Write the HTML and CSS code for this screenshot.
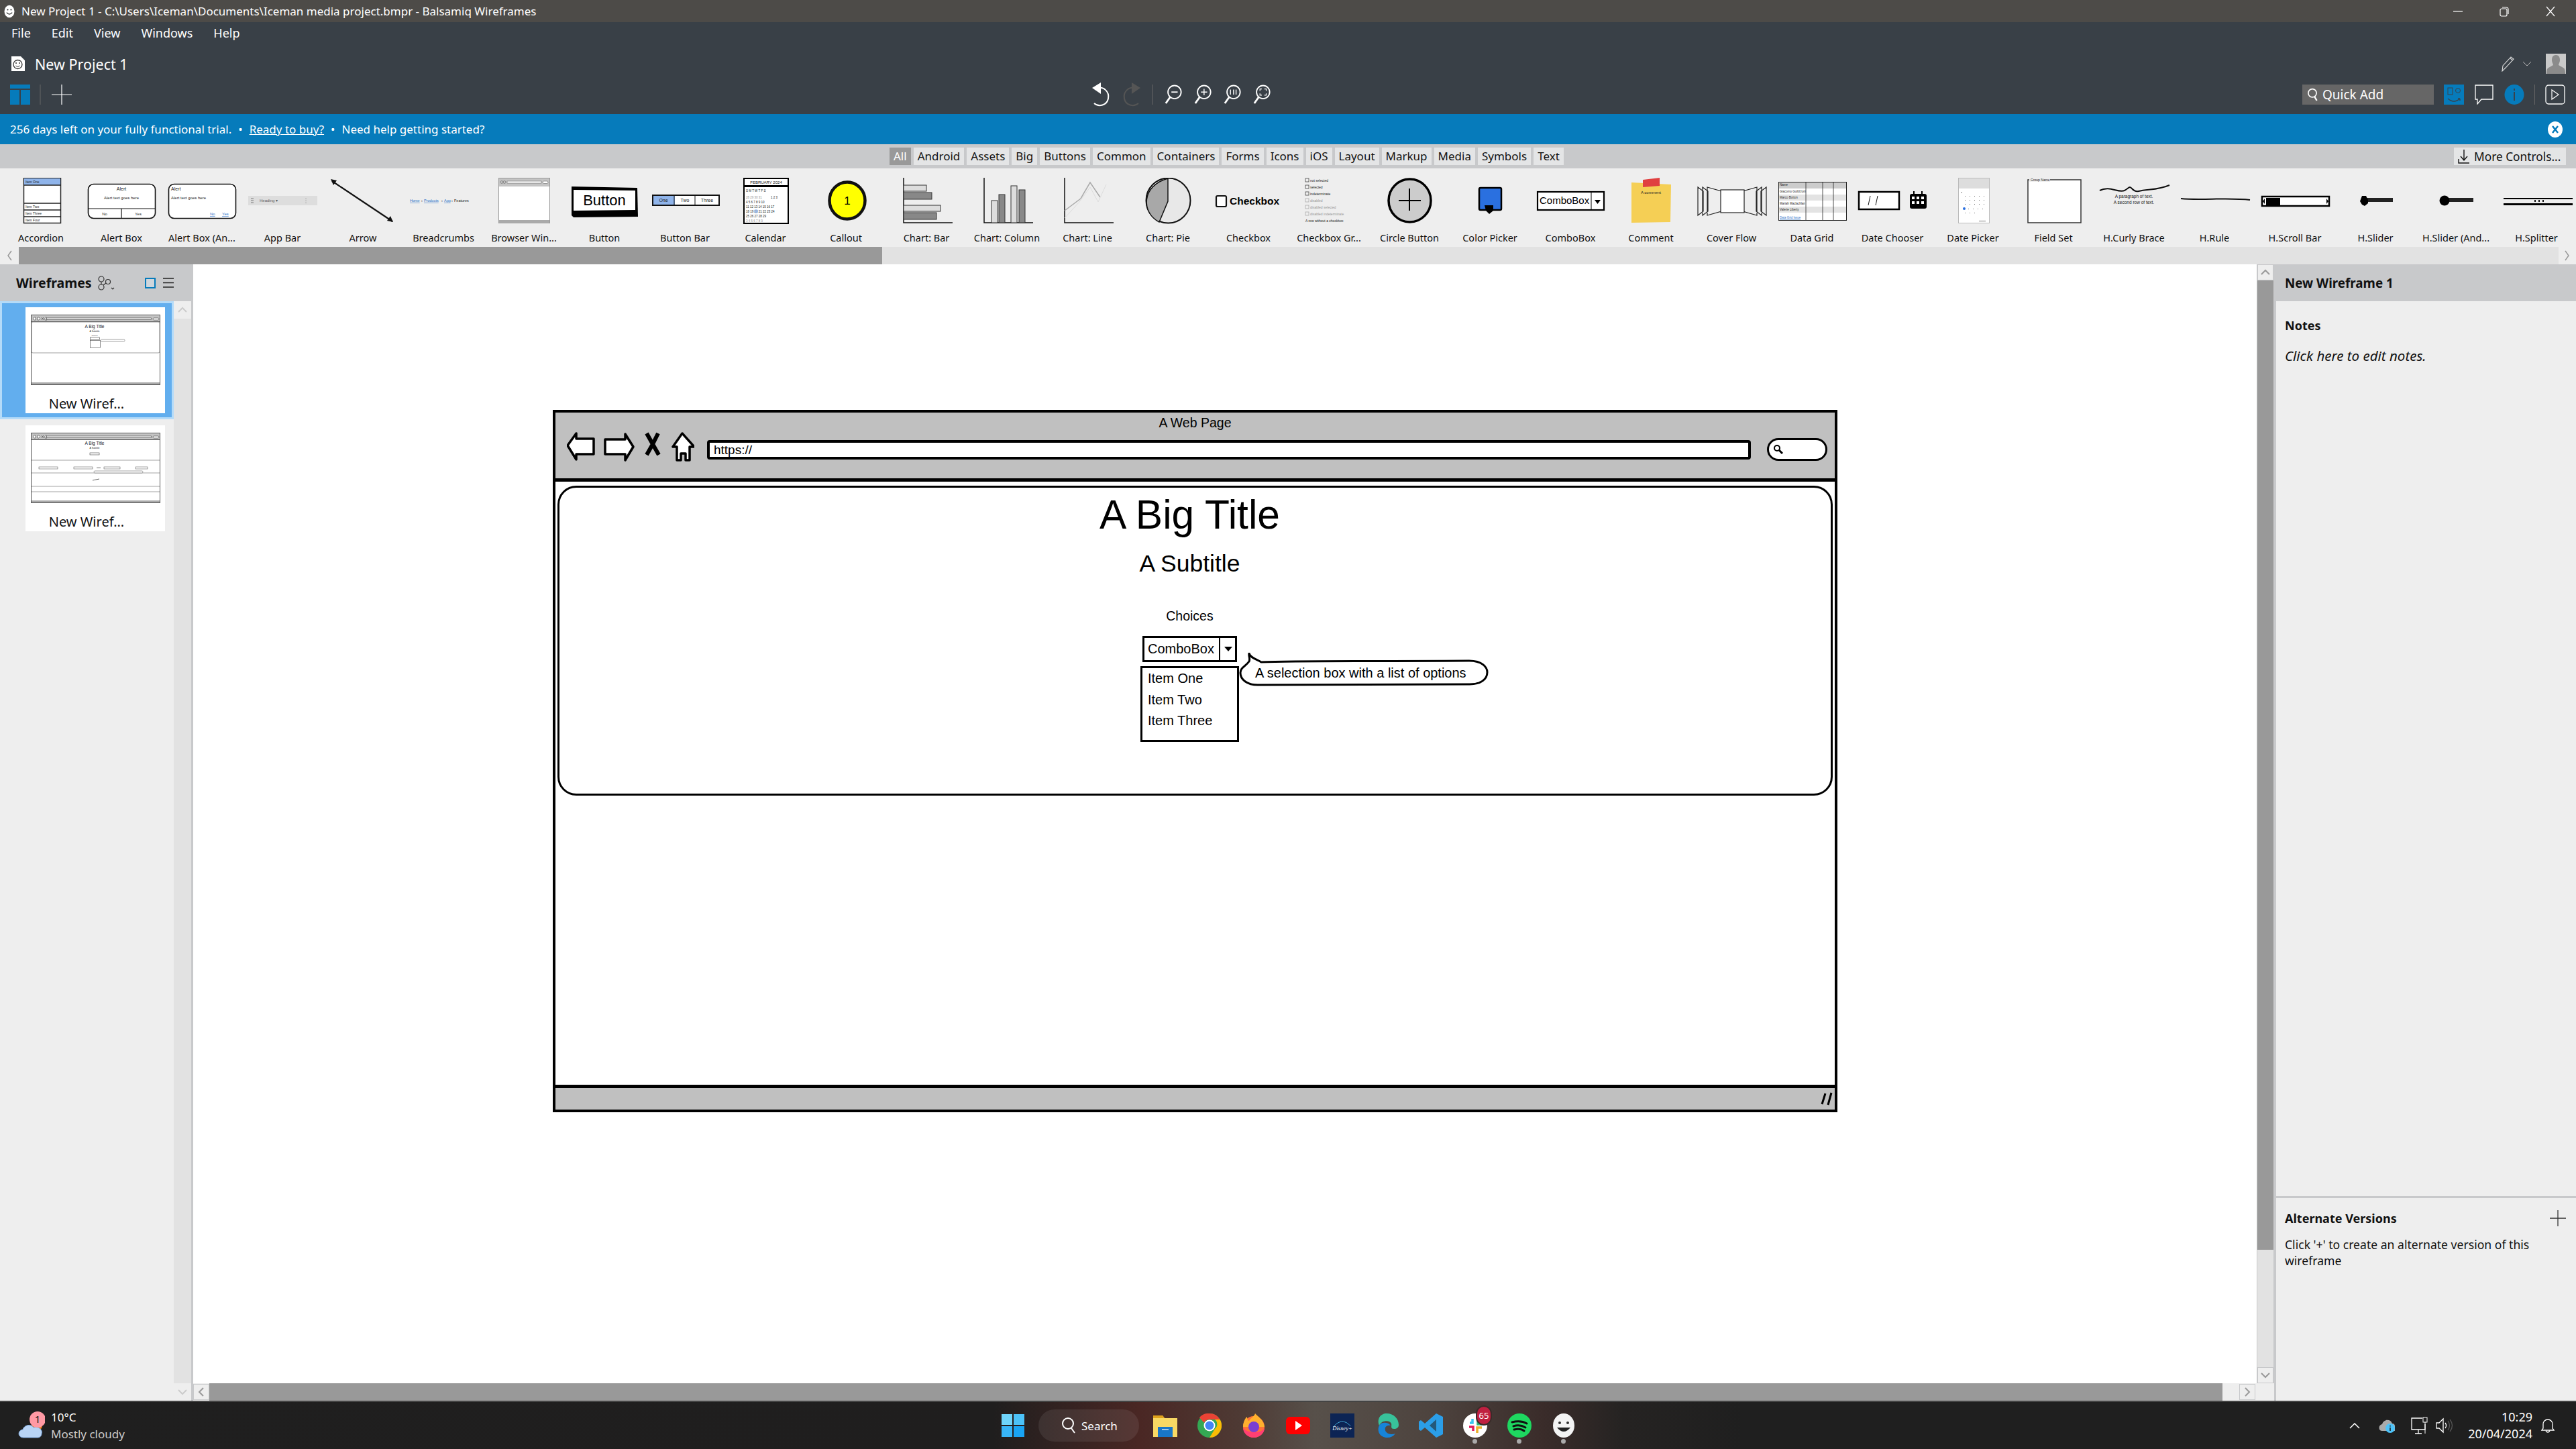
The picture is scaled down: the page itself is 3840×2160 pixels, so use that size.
FILE: index.html
```html
<!DOCTYPE html>
<html lang="en">
<head>
    <meta charset="UTF-8">
    <title>New Project 1 - Balsamiq Wireframes</title>
    <link rel="stylesheet" href="styles.css">
</head>
<body>
    <svg class="defs" width="0" height="0">
        <symbol id="face" viewBox="0 0 20 24">
            <ellipse cx="10" cy="12" rx="9" ry="11" fill="#fff"/>
            <circle cx="7" cy="9" r="1.3" fill="#333"/>
            <circle cx="13" cy="9" r="1.3" fill="#333"/>
            <path d="M5 14q5 6 10 0" fill="none" stroke="#333" stroke-width="1.6"/>
        </symbol>
        <symbol id="zoomglass" viewBox="0 0 30 32">
            <circle cx="17" cy="12" r="10.5" fill="none" stroke="#fff" stroke-width="2"/>
            <path d="M10 20L3 30" stroke="#fff" stroke-width="3"/>
        </symbol>
        <symbol id="mini-top" viewBox="0 0 193 11">
            <rect x=".5" y=".5" width="192" height="10" fill="#c4c4c4" stroke="#555"/>
            <path d="M3 6l2-2h2v4H5zM14 6l-2-2h-2v4h2zM16 4l3 4m0-4l-3 4M21 8V5l1.500-1.500L24 5v3z" fill="#fff" stroke="#333" stroke-width=".6"/>
            <rect x="23.500" y="5" width="156" height="2.500" fill="#fff" stroke="#333" stroke-width=".6"/>
            <rect x="182" y="5" width="9" height="3" rx="1.500" fill="#fff" stroke="#333" stroke-width=".6"/>
        </symbol>
    </svg>

    <header class="titlebar">
        <svg class="title-icon" viewBox="0 0 20 24"><use href="#face"/></svg>
        <span class="title-text">New Project 1 - C:\Users\Iceman\Documents\Iceman media project.bmpr - Balsamiq Wireframes</span>
        <div class="win-btns">
            <svg width="18" height="18" viewBox="0 0 18 18"><path d="M2 9h14" stroke="#fff" stroke-width="1.2"/></svg>
            <svg width="18" height="18" viewBox="0 0 18 18"><rect x="3" y="5" width="10" height="11" rx="2" fill="none" stroke="#fff" stroke-width="1.2"/><path d="M6 3h6a3 3 0 0 1 3 3v7" fill="none" stroke="#fff" stroke-width="1.2"/></svg>
            <svg width="18" height="18" viewBox="0 0 18 18"><path d="M3 2l12 14M15 2L3 16" stroke="#fff" stroke-width="1.2"/></svg>
        </div>
    </header>

    <section class="appbar">
        <nav class="menu">
            <span>File</span><span>Edit</span><span>View</span><span>Windows</span><span>Help</span>
        </nav>
        <div class="project-row">
            <svg class="doc-icon" width="22" height="24" viewBox="0 0 22 24"><path d="M1 1h14l6 6v16H1z" fill="#fff"/><circle cx="10.500" cy="13" r="6.500" fill="none" stroke="#333" stroke-width="1.300"/><circle cx="8" cy="11" r="1" fill="#333"/><circle cx="13" cy="11" r="1" fill="#333"/><path d="M7.500 15q3 3 6 0" fill="none" stroke="#333"/></svg>
            <span class="project-name">New Project 1</span>
            <div class="project-tools">
                <svg width="24" height="24" viewBox="0 0 24 24"><path d="M3 23l1-8L16 2l4 3-12 13zM15 4l4 3" fill="none" stroke="#ddd" stroke-width="1.100"/></svg>
                <svg class="chev" width="14" height="8" viewBox="0 0 14 8"><path d="M1 1l6 6 6-6" fill="none" stroke="#bbb"/></svg>
                <svg class="avatar" width="30" height="30" viewBox="0 0 30 30"><rect width="30" height="30" fill="#c9c9c9"/><path d="M15 2c5 0 6 4 6 8 0 3-2 5-2 7l7 4c2 1 3 3 3 9H1c0-6 1-8 3-9l7-4c0-2-2-4-2-7 0-4 1-8 6-8z" fill="#8b8b8b"/></svg>
            </div>
        </div>
        <div class="tool-row">
            <svg class="tool-left" width="92" height="30" viewBox="0 0 92 30">
                <path d="M0 0h30v6H0zM0 8h14v22H0zM16 8h14v22H16z" fill="#067bbb"/>
                <path d="M45 0v30" stroke="#666"/>
                <path d="M77 0v30M62 15h30" stroke="#fff" stroke-width="1.200"/>
            </svg>
            <div class="tool-mid">
                <svg class="undo" width="30" height="38" viewBox="0 0 30 38"><path d="M9 9c10-2 19 5 17 16-2 10-14 13-21 7" fill="none" stroke="#fff" stroke-width="2"/><path d="M15 1v17L2 9z" fill="#fff"/></svg>
                <svg class="undo" width="30" height="38" viewBox="0 0 30 38"><path d="M21 9C11 7 2 14 4 25c2 10 14 13 21 7" fill="none" stroke="#555" stroke-width="2"/><path d="M15 1v17L28 9z" fill="#555"/></svg>
                <span class="tool-sep"></span>
                <svg width="28" height="30" viewBox="0 0 30 32"><use href="#zoomglass"/><path d="M12 12h10" stroke="#fff" stroke-width="2"/></svg>
                <svg width="28" height="30" viewBox="0 0 30 32"><use href="#zoomglass"/><path d="M12 12h10M17 7v10" stroke="#fff" stroke-width="1.500"/></svg>
                <svg width="28" height="30" viewBox="0 0 30 32"><use href="#zoomglass"/><path d="M12 8v8M17 8v8M21 8v8" stroke="#fff" stroke-width="1.500"/></svg>
                <svg width="28" height="30" viewBox="0 0 30 32"><use href="#zoomglass"/><path d="M12 10V7h3M19 7h3v3M22 14v3h-3M15 17h-3v-3" fill="none" stroke="#fff" stroke-width="1.300"/></svg>
            </div>
            <div class="quick-add">
                <svg width="16" height="20" viewBox="0 0 14 18"><circle cx="7" cy="7" r="5.500" fill="none" stroke="#fff" stroke-width="1.500"/><path d="M10 12l3 5" stroke="#fff" stroke-width="2"/></svg>
                <span>Quick Add</span>
            </div>
            <div class="tool-right">
                <svg width="30" height="30" viewBox="0 0 30 30"><rect width="30" height="30" fill="#067bbb"/><rect x="6" y="5" width="7" height="10" fill="none" stroke="#39424b"/><circle cx="21" cy="9" r="3.500" fill="none" stroke="#39424b"/><path d="M6 21q9 8 18 0m0 0l-3 0m3 0v3" fill="none" stroke="#39424b" stroke-width="1.400"/></svg>
                <svg width="30" height="30" viewBox="0 0 30 30"><path d="M2 1h26v21H11l-6 7v-7H2z" fill="none" stroke="#fff" stroke-width="1.300"/></svg>
                <svg width="30" height="30" viewBox="0 0 30 30"><ellipse cx="15" cy="15" rx="14.500" ry="15" fill="#067bbb"/><rect x="14" y="11" width="2" height="13" fill="#39424b"/><rect x="14" y="6" width="2" height="3" fill="#39424b"/></svg>
                <span class="tool-sep"></span>
                <svg width="30" height="30" viewBox="0 0 30 30"><rect x="1" y="1" width="28" height="28" rx="4" fill="none" stroke="#fff" stroke-width="1.300"/><path d="M10 8l10 7-10 7z" fill="none" stroke="#fff" stroke-width="1.200"/></svg>
            </div>
        </div>
    </section>

    <section class="notice">
        <span>256 days left on your fully functional trial.</span>
        <span class="bull">•</span>
        <a href="#">Ready to buy?</a>
        <span class="bull">•</span>
        <span>Need help getting started?</span>
        <svg class="notice-close" width="24" height="24" viewBox="0 0 24 24"><ellipse cx="12" cy="12" rx="11" ry="12" fill="#fff"/><path d="M8 7l8 10M16 7L8 17" stroke="#067bbb" stroke-width="2.500"/></svg>
    </section>

    <section class="filters">
        <div class="filter-tabs">
            <span class="tab tab-on">All</span><span class="tab">Android</span><span class="tab">Assets</span><span class="tab">Big</span><span class="tab">Buttons</span><span class="tab">Common</span><span class="tab">Containers</span><span class="tab">Forms</span><span class="tab">Icons</span><span class="tab">iOS</span><span class="tab">Layout</span><span class="tab">Markup</span><span class="tab">Media</span><span class="tab">Symbols</span><span class="tab">Text</span>
        </div>
        <div class="more-btn">
            <svg width="20" height="22" viewBox="0 0 20 22"><path d="M10 1v15M5 11l5 6 5-6M2 15v6h16" fill="none" stroke="#111" stroke-width="1.400"/></svg>
            <span>More Controls...</span>
        </div>
    </section>

    <section class="library">
        <div class="lib-item">
            <svg class="lib-icon" viewBox="0 0 120 70"><rect x="34.500" y=".5" width="55" height="67" fill="#fff" stroke="#222" stroke-width="1.500"/><rect x="35" y="1" width="54" height="10" fill="#8fb4ea"/><path d="M34 11h56M34 38h56M34 48h56M34 58h56" stroke="#222" stroke-width="1.300"/><g class="tiny" font-size="5"><text x="37" y="8">Item One</text><text x="37" y="45">Item Two</text><text x="37" y="55">Item Three</text><text x="37" y="65">Item Four</text></g></svg>
            <span>Accordion</span>
        </div>
        <div class="lib-item">
            <svg class="lib-icon" viewBox="0 0 120 70"><rect x="10.500" y="9.500" width="100" height="51" rx="8" fill="#fff" stroke="#111" stroke-width="1.600"/><path d="M11 46h99M60 46v15" stroke="#111" stroke-width="1.200"/><g class="tiny" text-anchor="middle"><text x="60" y="19" font-size="7">Alert</text><text x="60" y="32" font-size="6">Alert text goes here</text><text x="35" y="56" font-size="6">No</text><text x="85" y="56" font-size="6">Yes</text></g></svg>
            <span>Alert Box</span>
        </div>
        <div class="lib-item">
            <svg class="lib-icon" viewBox="0 0 120 70"><rect x="10.500" y="9.500" width="100" height="51" rx="8" fill="#fff" stroke="#111" stroke-width="1.600"/><g class="tiny"><text x="14" y="19" font-size="7">Alert</text><text x="14" y="32" font-size="6">Alert text goes here</text></g><g class="tiny tiny-link" font-size="6"><text x="72" y="56">No</text><text x="90" y="56">Yes</text></g></svg>
            <span>Alert Box (An...</span>
        </div>
        <div class="lib-item">
            <svg class="lib-icon" viewBox="0 0 120 70"><rect x="9" y="27" width="103" height="14" fill="#ddd"/><path d="M13 31h4M13 34h4M13 37h4M95 31v1M95 34v1M95 37v1" stroke="#777"/><text x="26" y="36" class="tiny" font-size="6" opacity=".7">Heading ▾</text></svg>
            <span>App Bar</span>
        </div>
        <div class="lib-item">
            <svg class="lib-icon" viewBox="0 0 120 70"><path d="M14 5l90 60" stroke="#111" stroke-width="2.200"/><path d="M12 2l9 2-5 7zM105 66l-9-2 5-7z" fill="#111"/></svg>
            <span>Arrow</span>
        </div>
        <div class="lib-item">
            <svg class="lib-icon" viewBox="0 0 120 70"><g class="tiny" font-size="5.500"><text x="10" y="36" class="tiny-link">Home</text><text x="27" y="36">›</text><text x="31" y="36" class="tiny-link">Products</text><text x="57" y="36">›</text><text x="61" y="36" class="tiny-link">App</text><text x="72" y="36">›</text><text x="76" y="36">Features</text></g></svg>
            <span>Breadcrumbs</span>
        </div>
        <div class="lib-item">
            <svg class="lib-icon" viewBox="0 0 120 70"><rect x="22.500" y=".5" width="76" height="67" fill="#fff" stroke="#999"/><rect x="23" y="1" width="75" height="12" fill="#c4c4c4"/><rect x="23" y="63" width="75" height="5" fill="#aaa"/><rect x="35" y="5" width="51" height="3" fill="#fff" stroke="#666" stroke-width=".6"/><circle cx="27" cy="6.500" r="2" fill="none" stroke="#666" stroke-width=".6"/><circle cx="31" cy="6.500" r="2" fill="none" stroke="#666" stroke-width=".6"/><rect x="88" y="5" width="8" height="3.500" rx="1.700" fill="#fff" stroke="#666" stroke-width=".6"/></svg>
            <span>Browser Win...</span>
        </div>
        <div class="lib-item">
            <svg class="lib-icon" viewBox="0 0 120 70"><path d="M11 13l98 2 1 43-96 1-3-3z" fill="#000"/><path d="M14 18l92 1v29l-92 1z" fill="#fff"/><text x="60" y="41" class="sk" font-size="22" text-anchor="middle">Button</text></svg>
            <span>Button</span>
        </div>
        <div class="lib-item">
            <svg class="lib-icon" viewBox="0 0 120 70"><rect x="12" y="26" width="99" height="15" fill="#fff" stroke="#111" stroke-width="2"/><rect x="13" y="27" width="32" height="13" fill="#8fb4ea"/><path d="M44 26v15M75 26v15" stroke="#111"/><g class="tiny" font-size="7" text-anchor="middle"><text x="28" y="36">One</text><text x="60" y="36">Two</text><text x="93" y="36">Three</text></g></svg>
            <span>Button Bar</span>
        </div>
        <div class="lib-item">
            <svg class="lib-icon" viewBox="0 0 120 70"><rect x="28" y="1" width="66" height="67" fill="#fff" stroke="#000" stroke-width="2"/><rect x="28" y="11" width="66" height="3" fill="#000"/><text x="61" y="9" class="tiny" font-size="6" text-anchor="middle">FEBRUARY 2024</text><g class="tiny" font-size="4.500"><text x="31" y="21">S M T W T F S</text><text x="31" y="31" opacity=".5">28 29 30 31</text><text x="68" y="31">1 2 3</text><text x="31" y="38">4 5 6 7 8 9 10</text><text x="31" y="45">11 12 13 14 15 16 17</text><text x="31" y="52">18 19 20 21 22 23 24</text><text x="31" y="59">25 26 27 28 29</text><text x="31" y="66" opacity=".5">3 4 5 6 7 8 9</text></g><circle cx="46" cy="50" r="3" fill="#8fb4ea" opacity=".7"/></svg>
            <span>Calendar</span>
        </div>
        <div class="lib-item">
            <svg class="lib-icon" viewBox="0 0 120 70"><ellipse cx="62" cy="34" rx="26.500" ry="27.500" fill="#ffff00" stroke="#111" stroke-width="4.500"/><text x="62" y="40" class="sk" font-size="17" text-anchor="middle">1</text></svg>
            <span>Callout</span>
        </div>
        <div class="lib-item">
            <svg class="lib-icon" viewBox="0 0 120 70"><path d="M26 0v67h73" fill="none" stroke="#111" stroke-width="1.500"/><rect x="26" y="11" width="34" height="9" fill="#ddd" stroke="#333"/><rect x="26" y="22" width="42" height="10" fill="#888" stroke="#333"/><rect x="26" y="41" width="55" height="9" fill="#ddd" stroke="#333"/><rect x="26" y="52" width="49" height="10" fill="#888" stroke="#333"/></svg>
            <span>Chart: Bar</span>
        </div>
        <div class="lib-item">
            <svg class="lib-icon" viewBox="0 0 120 70"><path d="M26 0v67h73" fill="none" stroke="#111" stroke-width="1.500"/><rect x="37" y="34" width="9" height="33" fill="#ddd" stroke="#333"/><rect x="48" y="25" width="9" height="42" fill="#888" stroke="#333"/><rect x="66" y="12" width="9" height="55" fill="#ddd" stroke="#333"/><rect x="78" y="18" width="9" height="49" fill="#888" stroke="#333"/></svg>
            <span>Chart: Column</span>
        </div>
        <div class="lib-item">
            <svg class="lib-icon" viewBox="0 0 120 70"><path d="M26 0v67h73" fill="none" stroke="#111" stroke-width="1.500"/><path d="M26 49l24-18 14-24 15 22" fill="none" stroke="#aaa" stroke-width="1.500"/><path d="M26 60l22-24 16-22 12 22 12-26" fill="none" stroke="#ddd"/></svg>
            <span>Chart: Line</span>
        </div>
        <div class="lib-item">
            <svg class="lib-icon" viewBox="0 0 120 70"><ellipse cx="60.500" cy="34" rx="33" ry="33.500" fill="#e8e8e8" stroke="#111" stroke-width="2"/><path d="M60 1v34L47 66C20 52 20 12 60 1z" fill="#a8a8a8" stroke="#111" stroke-width="1.500"/></svg>
            <span>Chart: Pie</span>
        </div>
        <div class="lib-item">
            <svg class="lib-icon" viewBox="0 0 120 70"><rect x="12" y="27" width="15" height="16" rx="2" fill="#fff" stroke="#111" stroke-width="2.200"/><text x="32" y="40" class="sk sk-bold" font-size="15.500">Checkbox</text></svg>
            <span>Checkbox</span>
        </div>
        <div class="lib-item">
            <svg class="lib-icon" viewBox="0 0 120 70"><g fill="none" stroke="#444" stroke-width=".8"><rect x="25" y="1" width="5" height="5"/><rect x="25" y="11" width="5" height="5"/><rect x="25" y="21" width="5" height="5"/></g><g fill="none" stroke="#aaa" stroke-width=".8"><rect x="25" y="31" width="5" height="5"/><rect x="25" y="41" width="5" height="5"/><rect x="25" y="51" width="5" height="5"/></g><g class="tiny" font-size="5"><text x="32" y="6">not selected</text><text x="32" y="16">selected</text><text x="32" y="26">indeterminate</text><text x="32" y="36" opacity=".45">disabled</text><text x="32" y="46" opacity=".45">disabled selected</text><text x="32" y="56" opacity=".45">disabled indeterminate</text><text x="25" y="66">A row without a checkbox</text></g></svg>
            <span>Checkbox Gr...</span>
        </div>
        <div class="lib-item">
            <svg class="lib-icon" viewBox="0 0 120 70"><ellipse cx="60.500" cy="34" rx="31.500" ry="32" fill="#ccc" stroke="#000" stroke-width="3.500"/><path d="M60 16v33M44 34h33" stroke="#000" stroke-width="2"/></svg>
            <span>Circle Button</span>
        </div>
        <div class="lib-item">
            <svg class="lib-icon" viewBox="0 0 120 70"><rect x="44" y="15" width="33" height="33" rx="2" fill="#2a70e0" stroke="#000" stroke-width="2.500"/><path d="M52 41h13v8l-6 5-5-5z" fill="#000"/></svg>
            <span>Color Picker</span>
        </div>
        <div class="lib-item">
            <svg class="lib-icon" viewBox="0 0 120 70"><rect x="11" y="21" width="99" height="27" fill="#fff" stroke="#000" stroke-width="2.200"/><path d="M91 21v27" stroke="#000"/><text x="14" y="39" class="sk" font-size="15">ComboBox</text><path d="M96 33h9l-4.500 6z" fill="#000"/></svg>
            <span>ComboBox</span>
        </div>
        <div class="lib-item">
            <svg class="lib-icon" viewBox="0 0 120 70"><path d="M31 7l59 3-1 56-58 1z" fill="#f5cf55"/><path d="M48 3l25-3v12l-25 2z" fill="#e04040"/><text x="60" y="24" class="tiny" font-size="6" text-anchor="middle">A comment</text></svg>
            <span>Comment</span>
        </div>
        <div class="lib-item">
            <svg class="lib-icon" viewBox="0 0 120 70"><g fill="#eee" stroke="#222" stroke-width="1.200"><path d="M10 14l8 6v30l-8 6zM17 14l8 6v30l-8 6zM24 14l21 6v30l-21 6zM112 14l-8 6v30l8 6zM105 14l-8 6v30l8 6zM98 14l-21 6v30l21 6z"/><rect x="44" y="18" width="35" height="34" fill="#fff"/></g></svg>
            <span>Cover Flow</span>
        </div>
        <div class="lib-item">
            <svg class="lib-icon" viewBox="0 0 120 70"><rect x="10.500" y="6.500" width="101" height="57" fill="#fff" stroke="#222"/><rect x="11" y="7" width="100" height="9" fill="#ccc"/><g fill="#e3e3e3"><rect x="11" y="25" width="100" height="9"/><rect x="11" y="43" width="100" height="9"/></g><path d="M51 7v56M76 7v56M92 7v56" stroke="#222" stroke-width=".8"/><g class="tiny" font-size="4.500"><text x="12" y="12">Name</text><text x="12" y="22">Giacomo Guilizzoni</text><text x="12" y="31">Marco Botton</text><text x="12" y="40">Mariah Maclachlan</text><text x="12" y="49">Valerie Liberty</text></g><text x="12" y="61" class="tiny tiny-link" font-size="4.500">Data Grid Issue</text></svg>
            <span>Data Grid</span>
        </div>
        <div class="lib-item">
            <svg class="lib-icon" viewBox="0 0 120 70"><rect x="10" y="21" width="60" height="26" fill="#fff" stroke="#000" stroke-width="2.500"/><path d="M27 27l-3 14M38 27l-3 14" stroke="#111"/><rect x="86" y="24" width="25" height="22" rx="3" fill="#000"/><path d="M92 20v5M104 20v5" stroke="#000" stroke-width="2"/><g fill="#fff"><rect x="89" y="28" width="4" height="4"/><rect x="96" y="28" width="4" height="4"/><rect x="103" y="28" width="4" height="4"/><rect x="89" y="35" width="4" height="4"/><rect x="96" y="35" width="4" height="4"/><rect x="103" y="35" width="4" height="4"/></g></svg>
            <span>Date Chooser</span>
        </div>
        <div class="lib-item">
            <svg class="lib-icon" viewBox="0 0 120 70"><rect x="38.500" y=".5" width="46" height="67" fill="#fff" stroke="#bbb"/><rect x="39" y="1" width="45" height="15" fill="#ddd"/><g fill="#777"><path d="M43 21h1v2h-1zM48 27h1v1h-1zM55 27h1v1h-1zM62 27h1v1h-1zM69 27h1v1h-1zM76 27h1v1h-1zM48 33h1v1h-1zM55 33h1v1h-1zM62 33h1v1h-1zM69 33h1v1h-1zM76 33h1v1h-1zM48 39h1v1h-1zM55 39h1v1h-1zM62 39h1v1h-1zM69 39h1v1h-1zM76 39h1v1h-1zM53 46h1v1h-1zM60 46h1v1h-1zM67 46h1v1h-1zM74 46h1v1h-1zM48 52h1v1h-1zM55 52h1v1h-1zM62 52h1v1h-1zM69 64h10v1H69z"/></g><circle cx="47" cy="46" r="2" fill="#2a70e0"/></svg>
            <span>Date Picker</span>
        </div>
        <div class="lib-item">
            <svg class="lib-icon" viewBox="0 0 120 70"><rect x="22" y="3" width="79" height="64" fill="#fff" stroke="#333" stroke-width="1.500"/><rect x="24" y="0" width="31" height="6" fill="#eee"/><text x="26" y="5" class="tiny" font-size="5">Group Name</text></svg>
            <span>Field Set</span>
        </div>
        <div class="lib-item">
            <svg class="lib-icon" viewBox="0 0 120 70"><path d="M9 19c15-8 27 4 37 0 4-2 6-5 8-5 3 0 5 8 13 6 14-3 30-2 46-9" fill="none" stroke="#111" stroke-width="2"/><g class="tiny" font-size="6.500" text-anchor="middle"><text x="60" y="30">A paragraph of text.</text><text x="60" y="39">A second row of text.</text></g></svg>
            <span>H.Curly Brace</span>
        </div>
        <div class="lib-item">
            <svg class="lib-icon" viewBox="0 0 120 70"><path d="M10 31c30 3 70-2 103 2" fill="none" stroke="#111" stroke-width="2"/></svg>
            <span>H.Rule</span>
        </div>
        <div class="lib-item">
            <svg class="lib-icon" viewBox="0 0 120 70"><rect x="11" y="28" width="100" height="14" fill="#fff" stroke="#000" stroke-width="2.500"/><rect x="17" y="30" width="21" height="11" fill="#000"/><path d="M15 31v8l-3-4zM107 31v8l3-4z" fill="#000"/></svg>
            <span>H.Scroll Bar</span>
        </div>
        <div class="lib-item">
            <svg class="lib-icon" viewBox="0 0 120 70"><rect x="40" y="30" width="46" height="6" fill="#222"/><path d="M40 27h6l3 6v5l-5 4-4-2-3-5z" fill="#000"/></svg>
            <span>H.Slider</span>
        </div>
        <div class="lib-item">
            <svg class="lib-icon" viewBox="0 0 120 70"><rect x="40" y="30" width="46" height="6" fill="#222"/><circle cx="43" cy="34" r="7.500" fill="#000"/></svg>
            <span>H.Slider (And...</span>
        </div>
        <div class="lib-item">
            <svg class="lib-icon" viewBox="0 0 120 70"><rect x="11" y="30" width="103" height="2" fill="#000"/><rect x="11" y="38" width="103" height="3" fill="#000"/><path d="M57 33h2v3h-2zM63 33h2v3h-2zM69 33h2v3h-2z" fill="#111"/></svg>
            <span>H.Splitter</span>
        </div>
    </section>

    <div class="lib-scroll">
        <span class="arrow-box">
            <svg width="10" height="16" viewBox="0 0 10 16"><path d="M8 1L3 8l5 7" fill="none" stroke="#999" stroke-width="1.500"/></svg>
        </span>
        <span class="lib-thumb"></span>
        <span class="arrow-box arrow-end">
            <svg width="10" height="16" viewBox="0 0 10 16"><path d="M2 1l5 7-5 7" fill="none" stroke="#999" stroke-width="1.500"/></svg>
        </span>
    </div>

    <main class="workspace">
        <aside class="left-panel">
            <div class="panel-head">
                <strong>Wireframes</strong>
                <svg class="branch" width="27" height="22" viewBox="0 0 27 22"><circle cx="5" cy="5" r="4" fill="none" stroke="#333" stroke-width="1.200"/><circle cx="5" cy="17" r="4" fill="none" stroke="#333" stroke-width="1.200"/><circle cx="15" cy="9" r="3.500" fill="none" stroke="#333" stroke-width="1.200"/><path d="M5 9v4M8 14l4-3M20 18l2 2 2-2" fill="none" stroke="#333" stroke-width="1.200"/></svg>
                <span class="view-square"></span>
                <svg class="hamburger" width="16" height="15" viewBox="0 0 16 15"><path d="M0 1h16M0 7.500h16M0 14h16" stroke="#222" stroke-width="1.300"/></svg>
            </div>
            <div class="left-body">
                <div class="thumb-list">
                    <div class="thumb-wrap thumb-selected">
                        <div class="thumb">
                            <svg class="mini" viewBox="0 0 193 105">
                                <rect x=".5" y=".5" width="192" height="104" fill="#fff" stroke="#555"/>
                                <use href="#mini-top" width="193" height="11"/>
                                <rect x="1" y="11" width="191" height="46" rx="2" fill="#fff" stroke="#777" stroke-width=".7"/>
                                <text x="95" y="20" class="tiny" font-size="6.500" text-anchor="middle">A Big Title</text>
                                <text x="95" y="26" class="tiny" font-size="3.500" text-anchor="middle">A Subtitle</text>
                                <text x="95" y="32" class="tiny" font-size="2.500" text-anchor="middle">Choices</text>
                                <rect x="88.500" y="34" width="14" height="3.500" fill="#fff" stroke="#444" stroke-width=".6"/>
                                <rect x="88.500" y="38.500" width="15" height="11" fill="#fff" stroke="#444" stroke-width=".6"/>
                                <rect x="104" y="37" width="36" height="3" rx="1.500" fill="#fff" stroke="#666" stroke-width=".6"/>
                                <rect x="1" y="101" width="191" height="3" fill="#aaa"/>
                            </svg>
                            <span>New Wiref...</span>
                        </div>
                    </div>
                    <div class="thumb-wrap">
                        <div class="thumb">
                            <svg class="mini" viewBox="0 0 193 105">
                                <rect x=".5" y=".5" width="192" height="104" fill="#fff" stroke="#555"/>
                                <use href="#mini-top" width="193" height="11"/>
                                <text x="95" y="18" class="tiny" font-size="6.500" text-anchor="middle">A Big Title</text>
                                <text x="95" y="24" class="tiny" font-size="3.500" text-anchor="middle">A Subtitle</text>
                                <rect x="88" y="30" width="14" height="3" fill="#fff" stroke="#444" stroke-width=".6"/>
                                <path d="M1 41h191M1 60h191M1 80h191M1 88h191" stroke="#666" stroke-width=".6"/>
                                <g fill="#fff" stroke="#444" stroke-width=".5"><rect x="12" y="51" width="28" height="3"/><rect x="64" y="51" width="28" height="3"/><rect x="109" y="51" width="24" height="3"/><rect x="156" y="51" width="18" height="3"/></g>
                                <rect x="94" y="57" width="73" height="3" rx="1.500" fill="#fff" stroke="#666" stroke-width=".6"/>
                                <path d="M92 71l10-2M98 52.500h6" stroke="#222" stroke-width=".7"/>
                                <rect x="1" y="101" width="191" height="3" fill="#aaa"/>
                            </svg>
                            <span>New Wiref...</span>
                        </div>
                    </div>
                </div>
                <div class="side-scroll">
                    <span class="side-btn"><svg width="14" height="10" viewBox="0 0 14 10"><path d="M1 8l6-6 6 6" fill="none" stroke="#ccc" stroke-width="2"/></svg></span>
                    <span class="side-track"></span>
                    <span class="side-btn"><svg width="14" height="10" viewBox="0 0 14 10"><path d="M1 2l6 6 6-6" fill="none" stroke="#ccc" stroke-width="2"/></svg></span>
                </div>
            </div>
        </aside>

        <div class="canvas-col">
            <div class="canvas">
                <div class="wf-window">
                    <div class="wf-bar">
                        <div class="wf-title">A Web Page</div>
                        <div class="wf-nav">
                            <svg width="190" height="44" viewBox="0 0 190 44">
                                <g fill="#fff" stroke="#000" stroke-width="3.500" stroke-linejoin="round">
                                    <path d="M1 20L14 2v8h26v23H14v8z"/>
                                    <path d="M99 22L87 3v8H57v22h30v9z"/>
                                    <path d="M172 2l-14 20h6v20h6v-10h7v10h6V22h7z"/>
                                </g>
                                <path d="M119 2l9 16 8-16M137 34l-9-16-9 16" fill="none" stroke="#000" stroke-width="6"/>
                            </svg>
                            <div class="wf-url">https://</div>
                            <div class="wf-search"><svg width="16" height="16" viewBox="0 0 16 16"><circle cx="6" cy="6" r="4" fill="none" stroke="#000" stroke-width="2"/><path d="M9 9l5 5" stroke="#000" stroke-width="3"/></svg></div>
                        </div>
                    </div>
                    <div class="wf-body">
                        <div class="wf-container">
                            <h1>A Big Title</h1>
                            <h2>A Subtitle</h2>
                            <div class="wf-label">Choices</div>
                            <div class="wf-combo-area">
                                <div class="wf-combo">
                                    <span class="wf-combo-text">ComboBox</span>
                                    <span class="wf-combo-arrow"></span>
                                </div>
                                <ul class="wf-list">
                                    <li>Item One</li>
                                    <li>Item Two</li>
                                    <li>Item Three</li>
                                </ul>
                                <div class="wf-callout">
                                    <svg width="372" height="50" viewBox="0 0 372 50"><path d="M15 1c2 7 12 9 18 13 50-2 110-1 310-2 20 0 27 10 27 17 0 11-10 18-26 18-50 0-270 1-316 1C12 48 2 40 2 30c0-8 8-10 13-17 2-4-1-8 0-12z" fill="#fff" stroke="#000" stroke-width="3"/></svg>
                                    <span>A selection box with a list of options</span>
                                </div>
                            </div>
                        </div>
                    </div>
                    <div class="wf-status">
                        <svg width="22" height="24" viewBox="0 0 22 24"><path d="M8 4L3 20M17 3l-5 18" stroke="#000" stroke-width="3"/></svg>
                    </div>
                </div>
            </div>
            <div class="v-scroll">
                <span class="sq-btn"><svg width="14" height="10" viewBox="0 0 14 10"><path d="M1 8l6-6 6 6" fill="none" stroke="#999" stroke-width="2"/></svg></span>
                <span class="v-thumb"></span>
                <span class="v-track"></span>
                <span class="sq-btn"><svg width="14" height="10" viewBox="0 0 14 10"><path d="M1 2l6 6 6-6" fill="none" stroke="#999" stroke-width="2"/></svg></span>
            </div>
            <div class="h-scroll">
                <span class="sq-btn"><svg width="10" height="14" viewBox="0 0 10 14"><path d="M8 1L2 7l6 6" fill="none" stroke="#999" stroke-width="2"/></svg></span>
                <span class="h-thumb"></span>
                <span class="h-track"></span>
                <span class="sq-btn"><svg width="10" height="14" viewBox="0 0 10 14"><path d="M2 1l6 6-6 6" fill="none" stroke="#999" stroke-width="2"/></svg></span>
            </div>
            <div class="corner"></div>
        </div>

        <aside class="right-panel">
            <div class="panel-head right-head"><strong>New Wireframe 1</strong></div>
            <div class="notes">
                <strong>Notes</strong>
                <p>Click here to edit notes.</p>
            </div>
            <div class="alt-versions">
                <div class="alt-head">
                    <strong>Alternate Versions</strong>
                    <svg width="24" height="24" viewBox="0 0 24 24"><path d="M12 0v24M0 12h24" stroke="#333" stroke-width="1.300"/></svg>
                </div>
                <p>Click '+' to create an alternate version of this wireframe</p>
            </div>
        </aside>
    </main>

    <footer class="taskbar">
        <div class="weather">
            <svg class="weather-icon" width="40" height="44" viewBox="0 0 40 44"><circle cx="28" cy="22" r="8" fill="#f08020"/><path d="M8 40c-9 0-9-11-1-12 2-7 12-9 16-3 7-2 14 3 12 9 0 4-3 6-6 6z" fill="#b9d4f5" stroke="#7ea8dc"/><circle cx="29" cy="13" r="12" fill="#ff99a4"/><text x="29" y="18" class="badge-num" font-size="15" text-anchor="middle">1</text></svg>
            <div class="weather-text">
                <span>10°C</span>
                <span class="weather-sub">Mostly cloudy</span>
            </div>
        </div>
        <div class="task-icons">
            <svg class="task-start" width="36" height="36" viewBox="0 0 36 36"><path d="M1 1h16v16H1z" fill="#6fd5fb"/><path d="M19 1h16v16H19z" fill="#4cc2f8"/><path d="M1 19h16v16H1z" fill="#38b5f7"/><path d="M19 19h16v16H19z" fill="#19a4f4"/></svg>
            <div class="task-search">
                <svg width="22" height="26" viewBox="0 0 22 26"><circle cx="10" cy="10" r="8" fill="none" stroke="#fff" stroke-width="2"/><path d="M15 17l5 7" stroke="#fff" stroke-width="2"/></svg>
                <span>Search</span>
            </div>
            <div class="task-apps">
                <span class="app"><svg width="36" height="36" viewBox="0 0 36 36"><path d="M0 3h14l3 4h19v28H0z" fill="#f8d864"/><path d="M0 3h14l3 4H0z" fill="#e0a21c"/><path d="M7 20h22v15H7z" fill="#1876c8"/><path d="M13 24h10" stroke="#fff" stroke-width="2" opacity=".6"/></svg></span>
                <span class="app"><svg width="36" height="36" viewBox="0 0 36 36"><circle cx="18" cy="18" r="18" fill="#34a853"/><path d="M18 0a18 18 0 0 1 15.600 9H18a9 9 0 0 0-8 5L3 6A18 18 0 0 1 18 0z" fill="#ea4335"/><path d="M33.600 9A18 18 0 0 1 18 36l8-13a9 9 0 0 0 0-14z" fill="#fbbc05"/><circle cx="18" cy="18" r="8.500" fill="#fff"/><circle cx="18" cy="18" r="6.500" fill="#4285f4"/></svg></span>
                <span class="app"><svg width="36" height="36" viewBox="0 0 36 36"><circle cx="18" cy="20" r="16" fill="#ff7139"/><path d="M2 20C2 12 6 6 8 5c0 4 2 6 3 6 3-5 8-7 9-11 4 5 12 8 14 20z" fill="#ffb02e"/><path d="M18 36c-8 0-16-6-16-15 3 8 26 10 32 1 0 7-7 14-16 14z" fill="#ff3f72"/><circle cx="18" cy="20" r="8" fill="#7b3fd0"/></svg></span>
                <span class="app"><svg width="36" height="36" viewBox="0 0 36 36"><rect y="5" width="36" height="26" rx="6" fill="#f00"/><path d="M14 11l10 7-10 7z" fill="#fff"/></svg></span>
                <span class="app"><svg width="36" height="36" viewBox="0 0 36 36"><rect width="36" height="36" fill="#0c2454"/><path d="M6 19c6-9 18-9 24 0" fill="none" stroke="#3fa8d8"/><text x="18" y="25" class="disney" font-size="8.500" text-anchor="middle">Disney+</text></svg></span>
                <span class="app"><svg width="36" height="36" viewBox="0 0 36 36"><path d="M18 0c11 0 18 8 18 17 0 4-3 6-7 6-6 0-3-5-4-8-2-5-14-6-18 3C3 8 9 0 18 0z" fill="#38c29a"/><path d="M7 18C3 26 8 36 19 36c5 0 9-2 12-6-8 3-17-1-15-9 1-3 6-4 8-3-5-6-14-5-17 0z" fill="#1684d8"/></svg></span>
                <span class="app"><svg width="36" height="36" viewBox="0 0 36 36"><path d="M26 0l10 5v26l-10 5L9 21l-6 5-3-2v-12l3-2 6 5z" fill="#2b9ee8"/><path d="M26 9l-10 9 10 9z" fill="#1f1f1f" opacity=".55"/></svg></span>
                <span class="app app-run"><svg width="36" height="36" viewBox="0 0 36 36"><circle cx="18" cy="18" r="18" fill="#fff"/><path d="M14 8v6h-4" fill="none" stroke="#36c5f0" stroke-width="3.500"/><path d="M9 20h6v6" fill="none" stroke="#e01e5a" stroke-width="3.500"/><path d="M22 10v6h6" fill="none" stroke="#2eb67d" stroke-width="3.500"/><path d="M21 29v-8h7" fill="none" stroke="#ecb22e" stroke-width="3.500"/></svg><b class="badge">65</b></span>
                <span class="app app-run"><svg width="36" height="36" viewBox="0 0 36 36"><circle cx="18" cy="18" r="18" fill="#1ed760"/><path d="M7 13c8-2 15-2 22 2M9 19c6-2 13-1 18 2M10 24c5-1 11-1 15 2" fill="none" stroke="#111" stroke-width="3" stroke-linecap="round"/></svg></span>
                <span class="app app-run"><svg width="36" height="36" viewBox="0 0 36 36"><ellipse cx="18" cy="18" rx="16" ry="18" fill="#f4f4f4"/><circle cx="12" cy="14" r="2" fill="#333"/><circle cx="24" cy="14" r="2" fill="#333"/><path d="M8 21q10 12 20 0" fill="#222"/></svg></span>
            </div>
        </div>
        <div class="tray">
            <svg class="tray-chev" width="16" height="9" viewBox="0 0 16 9"><path d="M1 8l7-7 7 7" fill="none" stroke="#fff" stroke-width="1.500"/></svg>
            <svg class="tray-cloud" width="26" height="24" viewBox="0 0 26 24"><path d="M5 20c-6 0-6-9 0-10 2-8 13-8 15-1 3 0 4 2 4 4v7z" fill="#aaa"/><circle cx="17" cy="16" r="7" fill="#4cc2f8"/><path d="M17 15v5M17 12v1.500" stroke="#1f1f1f" stroke-width="1.600"/></svg>
            <svg class="tray-net" width="26" height="26" viewBox="0 0 26 26"><path d="M17 2H1v17h20v-8M6 25h10M11 19v6" fill="none" stroke="#fff" stroke-width="1.300"/><rect x="18" y="1" width="6" height="7" fill="none" stroke="#fff"/><path d="M21 8v17" stroke="#fff"/></svg>
            <svg class="tray-vol" width="26" height="24" viewBox="0 0 26 24"><path d="M1 8h4l6-6v20l-6-6H1z" fill="none" stroke="#fff" stroke-width="1.300"/><path d="M14 8q3 4 0 8" fill="none" stroke="#fff" stroke-width="1.300"/><path d="M18 5q5 7 0 14M21 3q7 9 0 18" fill="none" stroke="#555" stroke-width="1.300"/></svg>
            <div class="clock">
                <span>10:29</span>
                <span>20/04/2024</span>
            </div>
            <svg class="tray-bell" width="20" height="24" viewBox="0 0 20 24"><path d="M3 16V10a7 7 0 0 1 14 0v6l2 3H1zM7 20q3 4 6 0" fill="none" stroke="#fff" stroke-width="1.300"/></svg>
        </div>
    </footer>
</body>
</html>
```

FILE: styles.css
```css
* {
    box-sizing: border-box;
}

body {
    margin: 0;
    width: 3840px;
    height: 2160px;
    display: flex;
    flex-direction: column;
    overflow: hidden;
    font-family: "Noto Sans", "Open Sans", sans-serif;
    color: #111;
    background: #fff;
}

svg {
    display: block;
    flex: none;
}

.defs {
    position: absolute;
}

.tiny {
    font-family: "Liberation Sans", sans-serif;
    fill: #222;
}

.tiny-link {
    fill: #2a70c8;
    text-decoration: underline;
}

.sk {
    font-family: "Liberation Sans", sans-serif;
    fill: #000;
}

.sk-bold {
    font-weight: bold;
}

/* window chrome */
.titlebar {
    height: 33px;
    display: flex;
    align-items: center;
    padding-left: 5px;
    background: #4d4b48;
    color: #fff;
    font-size: 17px;
}

.title-icon {
    width: 18px;
    height: 20px;
}

.title-text {
    margin-left: 9px;
}

.win-btns {
    margin-left: auto;
    display: flex;
    gap: 51px;
    padding-right: 29px;
}

.appbar {
    height: 137px;
    background: #394047;
    color: #fff;
    display: flex;
    flex-direction: column;
}

.menu {
    height: 32px;
    display: flex;
    align-items: center;
    gap: 31px;
    padding-left: 17px;
    font-size: 18px;
}

.project-row {
    height: 60px;
    display: flex;
    align-items: center;
    padding-left: 16px;
}

.project-name {
    margin-left: 14px;
    font-size: 21.500px;
}

.project-tools {
    margin-left: auto;
    display: flex;
    align-items: center;
    padding-right: 15px;
}

.chev {
    margin-left: 9px;
}

.avatar {
    margin-left: 21px;
}

.tool-row {
    height: 32px;
    display: flex;
    align-items: center;
    padding-left: 15px;
}

.tool-left {
    margin-right: 1519px;
}

.tool-mid {
    display: flex;
    align-items: center;
    gap: 16px;
}

.tool-sep {
    width: 1px;
    height: 30px;
    background: #666;
}

.quick-add {
    margin-left: 1537px;
    width: 196px;
    height: 30px;
    display: flex;
    align-items: center;
    gap: 7px;
    padding-left: 7px;
    background: #666;
    font-size: 19px;
}

.tool-right {
    margin-left: 15px;
    display: flex;
    align-items: center;
    gap: 15px;
}

.notice {
    height: 45px;
    position: relative;
    display: flex;
    align-items: center;
    gap: 10px;
    padding-left: 15px;
    background: #067bbb;
    color: #fff;
    font-size: 17px;
}

.notice a {
    color: #fff;
}

.notice-close {
    margin-left: auto;
    margin-right: 19px;
}

.filters {
    height: 36px;
    display: flex;
    align-items: center;
    justify-content: space-between;
    padding: 0 15px 0 1326px;
    background: #c8c9cb;
}

.filter-tabs {
    display: flex;
    gap: 4px;
}

.tab {
    height: 26px;
    line-height: 25px;
    padding: 0 6px;
    background: #e4e5e6;
    font-size: 17px;
}

.tab-on {
    background: #999;
    color: #fff;
}

.more-btn {
    width: 167px;
    height: 26px;
    display: flex;
    align-items: center;
    gap: 5px;
    padding-left: 5px;
    background: #e4e5e6;
    font-size: 17.300px;
    white-space: nowrap;
}

/* control library */
.library {
    height: 117px;
    display: flex;
    padding: 14px 0 0 1px;
    background: #eee;
}

.lib-item {
    width: 120px;
    flex: none;
    display: flex;
    flex-direction: column;
    align-items: center;
    font-size: 14.500px;
}

.lib-icon {
    width: 120px;
    height: 70px;
}

.lib-item span {
    margin-top: 8px;
    line-height: 22px;
    white-space: nowrap;
}

.lib-scroll {
    height: 26px;
    display: flex;
    background: #e2e2e2;
}

.arrow-box {
    width: 28px;
    display: flex;
    align-items: center;
    justify-content: center;
    background: #eee;
}

.arrow-end {
    margin-left: auto;
    width: 26px;
}

.lib-thumb {
    width: 1287px;
    background: #999;
}

/* workspace */
.workspace {
    flex: 1;
    min-height: 0;
    display: flex;
}

.left-panel {
    width: 288px;
    display: flex;
    flex-direction: column;
    border-right: 3px solid #c8c9cb;
    background: #eee;
}

.panel-head {
    height: 55px;
    flex: none;
    display: flex;
    align-items: center;
    padding-left: 24px;
    background: #c8c9cb;
    font-size: 19.500px;
}

.branch {
    margin-left: 9px;
}

.view-square {
    width: 16px;
    height: 16px;
    margin-left: 43px;
    border: 2px solid #067bbb;
    background: #cfd6dc;
}

.hamburger {
    margin-left: 11px;
}

.left-body {
    flex: 1;
    min-height: 0;
    display: flex;
}

.thumb-list {
    width: 259px;
    display: flex;
    flex-direction: column;
    gap: 9px;
}

.thumb-wrap {
    height: 159px;
    padding-left: 38px;
}

.thumb-selected {
    height: 176px;
    padding: 6px 10px 6px 35px;
    border: 3px solid #b5dbf8;
    background: #62aeee;
}

.thumb {
    width: 208px;
    height: 158px;
    display: flex;
    flex-direction: column;
    align-items: center;
    padding-top: 11px;
    background: #fff;
    font-size: 20px;
}

.mini {
    width: 193px;
    height: 105px;
}

.thumb span {
    margin-top: 15px;
    margin-right: 26px;
    line-height: 26px;
    color: #111;
}

.side-scroll {
    width: 26px;
    display: flex;
    flex-direction: column;
    background: #e2e2e2;
}

.side-btn {
    height: 26px;
    flex: none;
    display: flex;
    align-items: center;
    justify-content: center;
    background: #eee;
}

.side-track {
    flex: 1;
}

.canvas-col {
    width: 3102px;
    display: grid;
    grid-template-columns: 3076px 26px;
    grid-template-rows: 1668px 26px;
}

.canvas {
    position: relative;
    background: #fff;
}

/* the wireframe sits at its place on the free canvas */
.wf-window {
    position: absolute;
    left: 536px;
    top: 217px;
    width: 1915px;
    height: 1047px;
    display: flex;
    flex-direction: column;
    border: 4px solid #000;
    background: #fff;
    font-family: "Liberation Sans", sans-serif;
    color: #000;
}

.wf-bar {
    height: 103px;
    flex: none;
    border-bottom: 5px solid #000;
    background: #c0c0c0;
}

.wf-title {
    padding: 4px 0 0 0;
    text-align: center;
    font-size: 19.500px;
    line-height: 22px;
}

.wf-nav {
    height: 44px;
    margin-top: 3px;
    display: flex;
    align-items: center;
    padding: 0 11px 0 17px;
}

.wf-url {
    flex: 1;
    height: 29px;
    margin: 8px 0 0 19px;
    padding-left: 6px;
    border: 4px solid #000;
    border-radius: 4px;
    background: #fff;
    font-size: 19px;
    line-height: 21px;
}

.wf-search {
    width: 90px;
    height: 34px;
    margin: 8px 0 0 24px;
    display: flex;
    align-items: center;
    padding-left: 6px;
    border: 3px solid #000;
    border-radius: 17px;
    background: #fff;
}

.wf-body {
    flex: 1;
    min-height: 0;
    padding: 6px 3px 0;
}

.wf-container {
    height: 462px;
    display: flex;
    flex-direction: column;
    align-items: center;
    padding-right: 16px;
    border: 3px solid #000;
    border-radius: 28px;
}

.wf-container h1 {
    margin: 0;
    font-size: 60.500px;
    font-weight: normal;
    line-height: 80px;
}

.wf-container h2 {
    margin: 13px 0 0;
    font-size: 35.500px;
    font-weight: normal;
    line-height: 40px;
}

.wf-label {
    margin-top: 46px;
    font-size: 19.500px;
    line-height: 24px;
}

.wf-combo-area {
    position: relative;
    margin-top: 18px;
    width: 147px;
    display: flex;
    flex-direction: column;
    align-items: center;
    font-size: 20px;
}

.wf-combo {
    width: 141px;
    height: 39px;
    display: flex;
    border: 3px solid #000;
}

.wf-combo-text {
    width: 113px;
    padding-left: 5px;
    border-right: 2px solid #000;
    line-height: 33px;
}

.wf-combo-arrow {
    width: 0;
    height: 0;
    margin: 13px 0 0 6px;
    border-style: solid;
    border-width: 7px 6px 0;
    border-color: #000 transparent transparent;
}

.wf-list {
    width: 147px;
    height: 113px;
    margin: 6px 0 0;
    padding: 0 0 0 8px;
    list-style: none;
    border: 3px solid #000;
    line-height: 31.500px;
}

.wf-callout {
    position: absolute;
    left: 147px;
    top: 25px;
    width: 372px;
    height: 50px;
}

.wf-callout svg {
    position: absolute;
}

.wf-callout span {
    position: absolute;
    left: 24px;
    top: 18px;
    font-size: 20px;
    line-height: 24px;
    white-space: nowrap;
}

.wf-status {
    height: 37px;
    flex: none;
    margin-top: auto;
    display: flex;
    align-items: center;
    justify-content: flex-end;
    border-top: 5px solid #000;
    background: #c0c0c0;
}

.v-scroll {
    display: flex;
    flex-direction: column;
    background: #e2e2e2;
    border: solid #c8c9cb;
    border-width: 0 1px;
}

.v-thumb {
    height: 1445px;
    background: #999;
}

.v-track {
    flex: 1;
}

.sq-btn {
    width: 24px;
    height: 24px;
    flex: none;
    display: flex;
    align-items: center;
    justify-content: center;
    border: 1px solid #c8c9cb;
    background: #eee;
}

.h-scroll {
    display: flex;
    align-items: center;
    background: #eee;
}

.h-thumb {
    width: 3001px;
    height: 26px;
    background: #999;
}

.h-track {
    width: 25px;
    height: 26px;
}

.corner {
    background: #eee;
}

.right-panel {
    width: 450px;
    display: flex;
    flex-direction: column;
    border-left: 3px solid #c8c9cb;
    background: #eee;
    font-size: 18px;
}

.right-head {
    padding-left: 13px;
    font-size: 18.800px;
}

.notes {
    height: 1337px;
    padding: 24px 13px 0;
    border-bottom: 3px solid #c8c9cb;
}

.notes strong {
    display: block;
    line-height: 24px;
}

.notes p {
    margin: 21px 0 0;
    font-size: 20.500px;
    font-style: italic;
    line-height: 24px;
}

.alt-versions {
    padding: 18px 15px 0 13px;
}

.alt-head {
    display: flex;
    align-items: center;
    justify-content: space-between;
}

.alt-versions p {
    margin: 15px 0 0;
    line-height: 24px;
    font-size: 17.600px;
    width: 380px;
}

/* taskbar */
.taskbar {
    height: 72px;
    position: relative;
    display: flex;
    align-items: center;
    border-top: 2px solid #444;
    background: linear-gradient(90deg, #1f1f1f 0, #1f1e1e 1480px, #4a2724 1700px, #4e3a34 1850px, #57504a 1960px, #4d433e 2140px, #3a2c2a 2300px, #252322 2420px, #1f1f1f 2600px);
    color: #fff;
    font-size: 17px;
}

.weather {
    width: 1492px;
    display: flex;
    align-items: center;
    padding-left: 27px;
}

.weather-text {
    margin-left: 9px;
    display: flex;
    flex-direction: column;
    line-height: 25px;
}

.weather-sub {
    color: #ccc;
}

.badge-num {
    font-family: "Noto Sans", sans-serif;
    fill: #111;
}

.task-icons {
    display: flex;
    align-items: center;
}

.task-search {
    width: 150px;
    height: 48px;
    margin-left: 20px;
    display: flex;
    align-items: center;
    gap: 8px;
    padding-left: 34px;
    border-radius: 24px;
    background: rgba(255, 255, 255, .08);
}

.task-apps {
    margin-left: 21px;
    display: flex;
    gap: 30px;
}

.app {
    position: relative;
    width: 36px;
    height: 36px;
}

.app-run::after {
    content: "";
    position: absolute;
    left: 14px;
    top: 38px;
    width: 7px;
    height: 7px;
    border-radius: 50%;
    background: #aaa;
}

.badge {
    position: absolute;
    left: 19px;
    top: -12px;
    width: 24px;
    height: 30px;
    border-radius: 12px;
    background: #c02040;
    border: 2px solid #3a2c2a;
    font-size: 13px;
    font-weight: normal;
    line-height: 26px;
    text-align: center;
}

.disney {
    font-family: "Liberation Serif", serif;
    font-style: italic;
    fill: #fff;
}

.tray {
    position: absolute;
    right: 0;
    top: 0;
    bottom: 0;
    display: flex;
    align-items: center;
}

.tray-cloud {
    margin-left: 28px;
}

.tray-net {
    margin-left: 22px;
}

.tray-vol {
    margin-left: 11px;
}

.clock {
    margin-left: 24px;
    width: 94px;
    display: flex;
    flex-direction: column;
    align-items: flex-end;
    font-size: 18px;
    line-height: 25px;
    white-space: nowrap;
}

.tray-bell {
    margin: 0 32px 0 13px;
}
```
